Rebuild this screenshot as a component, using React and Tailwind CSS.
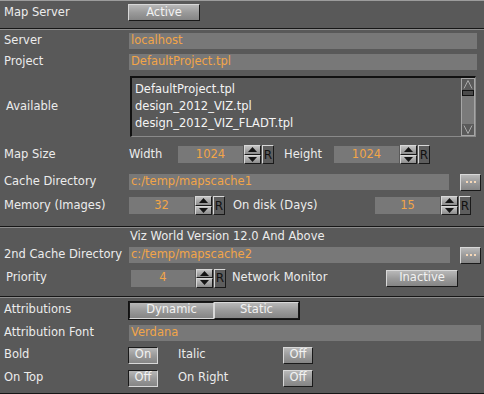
import React from 'react';

// --- shared looks ---
const raised = "border-t border-l border-t-[#d8d8d8] border-l-[#d8d8d8] border-r border-b border-r-[#1a1a1a] border-b-[#1a1a1a]";
const sunken = "border-t border-l border-t-[#1a1a1a] border-l-[#1a1a1a] border-r border-b border-r-[#d8d8d8] border-b-[#d8d8d8]";
const btnFill = "bg-linear-to-b from-[#b8b8b8] via-[#9a9a9a] to-[#858585] text-[#f2f2f2]";
const field = "h-[16px] bg-[#787878] text-[#f2a548] flex items-center";

function Sep() {
  return (
    <div>
      <div className="h-px bg-[#161616]" />
      <div className="h-px bg-[#8c8c8c]" />
    </div>
  );
}

function Btn({ children, w, pressed }) {
  return (
    <div className={`${w} h-[17px] flex items-center justify-center ${btnFill} ${pressed ? sunken : raised}`}>
      {children}
    </div>
  );
}

function Spinner() {
  const half = `flex-1 flex items-center justify-center bg-linear-to-b from-[#c4c4c4] to-[#8c8c8c] ${raised}`;
  return (
    <div className="w-[17px] h-[19px] flex flex-col">
      <div className={half}>
        <svg width="9" height="5" viewBox="0 0 9 5"><path d="M0 5 L4.5 0 L9 5Z" fill="#141414" /></svg>
      </div>
      <div className={half}>
        <svg width="9" height="5" viewBox="0 0 9 5"><path d="M0 0 L4.5 5 L9 0Z" fill="#141414" /></svg>
      </div>
    </div>
  );
}

function RBtn() {
  return (
    <div className={`w-[12px] h-[19px] flex items-center justify-center bg-[#5e5e5e] text-[#111] text-[12px] ${raised}`}>
      R
    </div>
  );
}

function NumField({ value, w = "w-[65px]" }) {
  return (
    <div className="flex items-center gap-px">
      <div className={`${w} h-[17px] bg-[#787878] text-[#f2a548] flex items-center justify-center`}>{value}</div>
      <Spinner />
      <RBtn />
    </div>
  );
}

function Dots() {
  return (
    <div className={`w-[21px] h-[17px] flex items-center justify-center gap-[2px] ${btnFill} ${raised}`}>
      <span className="w-[2px] h-[2px] bg-[#f6d8b8]" />
      <span className="w-[2px] h-[2px] bg-[#f6d8b8]" />
      <span className="w-[2px] h-[2px] bg-[#f6d8b8]" />
    </div>
  );
}

function Row({ h, label, indent, children }) {
  return (
    <div className={`${h} flex items-center`}>
      <div className={`w-[128px] shrink-0 whitespace-nowrap ${indent ? 'pl-[6px]' : 'pl-[4px]'}`}>{label}</div>
      {children}
    </div>
  );
}

const available = [
  'DefaultProject.tpl',
  'design_2012_VIZ.tpl',
  'design_2012_VIZ_FLADT.tpl',
];

export default function App() {
  return (
    <div
      className="w-[484px] h-[394px] bg-[#595959] text-[#ececec] text-[11.5px] leading-none overflow-hidden"
      style={{ fontFamily: '"DejaVu Sans", Verdana, sans-serif' }}
    >
      {/* map server */}
      <div className="h-[28px] border-t border-[#9c9c9c] pt-[3px]">
        <div className="h-[17px] flex items-center">
          <div className="w-[128px] pl-[4px]">Map Server</div>
          <Btn w="w-[72px]">Active</Btn>
        </div>
      </div>
      <Sep />

      {/* server settings */}
      <Row h="h-[21px]" label="Server">
        <div className={`${field} ml-px w-[348px] pl-[2px]`}>localhost</div>
      </Row>
      <Row h="h-[21px]" label="Project">
        <div className={`${field} ml-px w-[348px] pl-[2px]`}>DefaultProject.tpl</div>
      </Row>
      <div className="h-[69px] flex items-center">
        <div className="w-[128px] pl-[6px] shrink-0">Available</div>
        <div className="ml-[2px] w-[346px] h-[61px] flex border-t-2 border-l-2 border-[#111] border-b border-r border-b-[#8a8a8a] border-r-[#8a8a8a]">
          <div className="flex-1 overflow-hidden pl-[3px] pt-[3px] text-[#f4f4f4]">
            {available.map(a => (
              <div key={a} className="h-[17px] flex items-center">{a}</div>
            ))}
          </div>
          <div className="w-[14px] h-full border border-[#a6a6a6] bg-[#7a7a7a] flex flex-col">
            <div className="h-[11px] bg-[#5a5a5a] flex items-center justify-center">
              <svg width="10" height="9" viewBox="0 0 10 9"><path d="M1 8.5 L5 0.5 L9 8.5" fill="none" stroke="#a8a8a8" /></svg>
            </div>
            <div className="h-[6px] bg-[#4a4a4a] border border-[#111]" />
            <div className="flex-1" />
            <div className="h-[11px] bg-[#5a5a5a] flex items-center justify-center">
              <svg width="10" height="9" viewBox="0 0 10 9"><path d="M1 0.5 L5 8.5 L9 0.5" fill="none" stroke="#a8a8a8" /></svg>
            </div>
          </div>
        </div>
      </div>
      <Row h="h-[27px]" label="Map Size">
        <div className="w-[50px] pl-[1px]">Width</div>
        <NumField value="1024" />
        <div className="w-[60px] pl-[10px]">Height</div>
        <NumField value="1024" />
      </Row>
      <Row h="h-[28px]" label="Cache Directory">
        <div className={`${field} ml-px w-[320px] pl-[2px]`}>c:/temp/mapscache1</div>
        <div className="ml-[11px]"><Dots /></div>
      </Row>
      <Row h="h-[19px]" label="Memory (Images)">
        <div className="ml-px"><NumField value="32" /></div>
        <div className="w-[150px] pl-[8px]">On disk (Days)</div>
        <NumField value="15" />
      </Row>
      <div className="h-[11px]" />
      <Sep />

      {/* viz world */}
      <Row h="h-[18px]" label="">
        <div className="pl-[2px]">Viz World Version 12.0 And Above</div>
      </Row>
      <Row h="h-[18px]" label="2nd Cache Directory">
        <div className={`${field} ml-px w-[321px] pl-[2px]`}>c:/temp/mapscache2</div>
        <div className="ml-[10px]"><Dots /></div>
      </Row>
      <Row h="h-[28px]" label="Priority" indent>
        <div className="ml-[3px]"><NumField value="4" w="w-[64px]" /></div>
        <div className="w-[160px] pl-[6px]">Network Monitor</div>
        <Btn w="w-[72px]">Inactive</Btn>
      </Row>
      <div className="h-[4px]" />
      <Sep />

      {/* attributions */}
      <Row h="h-[24px]" label="Attributions">
        <div className="flex border border-[#111]">
          <Btn w="w-[85px]" pressed>Dynamic</Btn>
          <Btn w="w-[85px]">Static</Btn>
        </div>
      </Row>
      <Row h="h-[22px]" label="Attribution Font">
        <div className={`${field} ml-px w-[352px] pl-[2px]`}>Verdana</div>
      </Row>
      <Row h="h-[22px]" label="Bold">
        <Btn w="w-[30px]" pressed>On</Btn>
        <div className="w-[125px] pl-[20px]">Italic</div>
        <Btn w="w-[30px]">Off</Btn>
      </Row>
      <Row h="h-[24px]" label="On Top">
        <Btn w="w-[30px]" pressed>Off</Btn>
        <div className="w-[125px] pl-[20px]">On Right</div>
        <Btn w="w-[30px]">Off</Btn>
      </Row>
      <div className="h-[3px]" />
      <div className="h-px bg-[#161616]" />
    </div>
  );
}
